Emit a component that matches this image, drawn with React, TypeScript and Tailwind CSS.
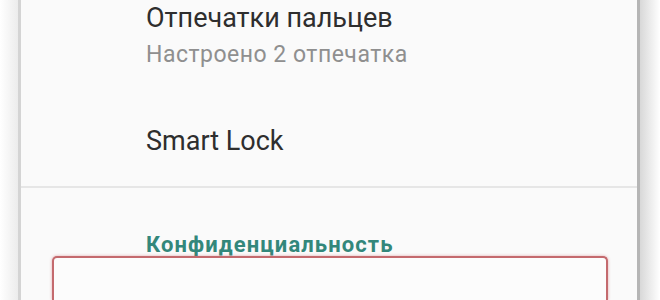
export default function App() {
  return (
    <div className="w-[660px] h-[300px] overflow-hidden bg-white flex font-['Roboto',sans-serif]">
      {/* left edge shadow */}
      <div className="w-[18px] bg-gradient-to-r from-white to-[#ececec]" />
      <div className="w-[3px] bg-[#d4d4d4]" />
      <div className="flex-1 bg-[#fafafa] flex flex-col">
        <div className="pl-[125px] pt-[2px]">
          <div className="text-[27px] leading-[32px] text-[#2e2e2e]">Отпечатки пальцев</div>
          <div className="text-[23px] leading-[28px] tracking-[0.5px] text-[#8f8f8f] mt-[7px]">
            Настроено 2 отпечатка
          </div>
        </div>
        <div className="pl-[125px] mt-[56px]">
          <div className="text-[27px] leading-[32px] text-[#2e2e2e]">Smart Lock</div>
        </div>
        <div className="mt-[29px] h-[2px] bg-[#e6e6e6]" />
        <div className="pl-[125px] mt-[45px] text-[22px] leading-[24px] font-bold tracking-[1.1px] text-[#33877b]">
          Конфиденциальность
        </div>
        <div className="ml-[31px] mr-[29px] -mt-[1px] flex-1 rounded-t-[5px] border-2 border-b-0 border-[#c46a6e] shadow-[0_0_3px_rgba(200,80,90,0.5)] bg-[#fcfcfc]" />
      </div>
      <div className="w-[3px] bg-[#b5b5b5]" />
      <div className="w-[20px] bg-gradient-to-r from-[#d8d8d8] to-white" />
    </div>
  );
}
